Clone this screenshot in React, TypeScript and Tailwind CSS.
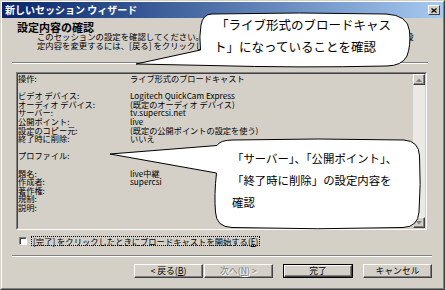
import React from 'react'

const rows: [string, string][] = [
  ['操作:', 'ライブ形式のブロードキャスト'],
  ['', ''],
  ['ビデオ デバイス:', 'Logitech QuickCam Express'],
  ['オーディオ デバイス:', '(既定のオーディオ デバイス)'],
  ['サーバー:', 'tv.supercsi.net'],
  ['公開ポイント:', 'live'],
  ['設定のコピー元:', '(既定の公開ポイントの設定を使う)'],
  ['終了時に削除:', 'いいえ'],
  ['', ''],
  ['プロファイル:', ''],
  ['', ''],
  ['題名:', 'live中継'],
  ['作成者:', 'supercsi'],
  ['著作権:', ''],
  ['規制:', ''],
  ['説明:', ''],
]

function Btn({ children, disabled, def }: { children: React.ReactNode; disabled?: boolean; def?: boolean }) {
  const inner = (
    <div className="h-full w-full flex items-center justify-center border border-t-white border-l-white border-r-[#404040] border-b-[#404040] shadow-[inset_-1px_-1px_0_#808080] bg-[#d4d0c8]">
      <span
        className={`text-[8.8px] leading-none ${disabled ? 'text-[#808080] [text-shadow:1px_1px_0_#ffffff]' : 'text-black'}`}
      >
        {children}
      </span>
    </div>
  )
  if (def) {
    return <div className="w-[70px] h-[14px] border border-black">{inner}</div>
  }
  return <div className="w-[69px] h-[14px]">{inner}</div>
}

function ScrollBtn({ down }: { down?: boolean }) {
  return (
    <div className="w-[12px] h-[11px] flex items-center justify-center border border-t-white border-l-white border-r-[#404040] border-b-[#404040] shadow-[inset_-1px_-1px_0_#808080] bg-[#d4d0c8]">
      <svg width="6" height="4" viewBox="0 0 6 4">
        {down ? <polygon points="0,0 6,0 3,3.5" fill="#808080" /> : <polygon points="3,0.5 6,4 0,4" fill="#808080" />}
      </svg>
    </div>
  )
}

export default function App() {
  return (
    <div className="w-[445px] h-[290px] relative overflow-hidden font-['Noto_Sans_CJK_JP',sans-serif] text-black">
      <div className="w-full h-full bg-[#d4d0c8] border border-t-[#d4d0c8] border-l-[#d4d0c8] border-r-[#404040] border-b-[#404040]">
        <div className="w-full h-full flex flex-col border border-t-white border-l-white border-r-[#808080] border-b-[#808080]">
          {/* title bar */}
          <div className="h-[16px] flex items-center justify-between pl-[3px] pr-[3px] bg-gradient-to-r from-[#0a246a] to-[#a6caf0]">
            <span className="text-white font-bold text-[10px] leading-none whitespace-nowrap">新しいセッション ウィザード</span>
            <div className="w-[12px] h-[10px] flex items-center justify-center border border-t-white border-l-white border-r-[#404040] border-b-[#404040] bg-[#d4d0c8]">
              <svg width="6" height="5" viewBox="0 0 6 5">
                <path d="M0.5 0.5 L5.5 4.5 M5.5 0.5 L0.5 4.5" stroke="black" strokeWidth="1.3" />
              </svg>
            </div>
          </div>

          {/* header */}
          <div className="h-[44px] flex flex-col pt-[3px]">
            <div className="pl-[15px] text-[11px] leading-[12px] font-bold whitespace-nowrap">設定内容の確認</div>
            <div className="pl-[35px] text-[8.4px] leading-[9px] whitespace-nowrap mt-[-1px]">
              このセッションの設定を確認してください。ブロードキャストするには [完了] をクリックします。設
            </div>
            <div className="pl-[35px] text-[8.4px] leading-[9px] whitespace-nowrap">
              定内容を変更するには、[戻る] をクリックしてください。
            </div>
          </div>
          <div className="ml-[10px] w-[416px] h-[2px] border-t border-t-[#808080] border-b border-b-white" />

          {/* list box */}
          <div className="mt-[8px] ml-[14px] w-[411px] h-[158px] border border-t-[#808080] border-l-[#808080] border-r-white border-b-white">
            <div className="w-full h-full flex border border-t-[#404040] border-l-[#404040] border-r-[#d4d0c8] border-b-[#d4d0c8]">
              <div className="flex-1 flex flex-col text-[8.2px] leading-[8.6px]">
                {rows.map((r, i) => (
                  <div key={i} className="flex h-[8.6px] whitespace-nowrap">
                    <div className="w-[112px]">{r[0]}</div>
                    <div>{r[1]}</div>
                  </div>
                ))}
              </div>
              <div className="w-[12px] flex flex-col bg-[#ebe9e4]">
                <ScrollBtn />
                <div className="flex-1" />
                <ScrollBtn down />
              </div>
            </div>
          </div>

          {/* checkbox */}
          <div className="mt-[6px] ml-[17px] h-[10px] flex items-center gap-[4px]">
            <div className="w-[8px] h-[8px] bg-white border border-t-[#808080] border-l-[#808080] border-r-white border-b-white shadow-[inset_1px_1px_0_#404040]" />
            <div className="border border-dotted border-black px-[1px] h-[10px] flex items-center">
              <span className="text-[8.3px] leading-none whitespace-nowrap">
                [完了] をクリックしたときにブロードキャストを開始する(<u>E</u>)
              </span>
            </div>
          </div>

          <div className="mt-[9px] ml-[10px] w-[420px] h-[2px] border-t border-t-[#808080] border-b border-b-white" />

          {/* buttons */}
          <div className="mt-[7px] flex justify-end pr-[11px]">
            <Btn>&lt; 戻る(<u>B</u>)</Btn>
            <div className="w-[1px]" />
            <Btn disabled>次へ(<u>N</u>) &gt;</Btn>
            <div className="w-[10px]" />
            <Btn def>完了</Btn>
            <div className="w-[10px]" />
            <Btn>キャンセル</Btn>
          </div>
        </div>
      </div>

      {/* callouts */}
      <svg className="absolute inset-0 pointer-events-none" width="445" height="290" viewBox="0 0 445 290">
        <path
          d="M212 14 Q300 12 386 14 Q408 15 409.5 31 Q411 45 407 56 Q402 66 386 66 Q300 68 210 65.5 L136 64 L200.5 50 Q199 36 201 25 Q203 14 212 14 Z"
          fill="white"
          stroke="black"
          strokeWidth="1"
        />
        <path
          d="M233 140 Q318 138 404 140 Q419 141 419.5 156 Q421 185 419 212 Q418 227 403 227.5 Q318 230 232 227.5 Q216 227 215.5 212 Q214 195 216.5 173 L110 154 L217 145.5 Q220 140 233 140 Z"
          fill="white"
          stroke="black"
          strokeWidth="1"
        />
      </svg>
      <div className="absolute left-[216px] top-[14px] text-[12.5px] leading-[22px] whitespace-nowrap">
        <div>「ライブ形式のブロードキャス</div>
        <div className="-ml-[2px]">ト」になっていることを確認</div>
      </div>
      <div className="absolute left-[232px] top-[147px] text-[11.4px] leading-[22px] whitespace-nowrap">
        <div>「サーバー」、「公開ポイント」、</div>
        <div>「終了時に削除」の設定内容を</div>
        <div>確認</div>
      </div>
    </div>
  )
}
